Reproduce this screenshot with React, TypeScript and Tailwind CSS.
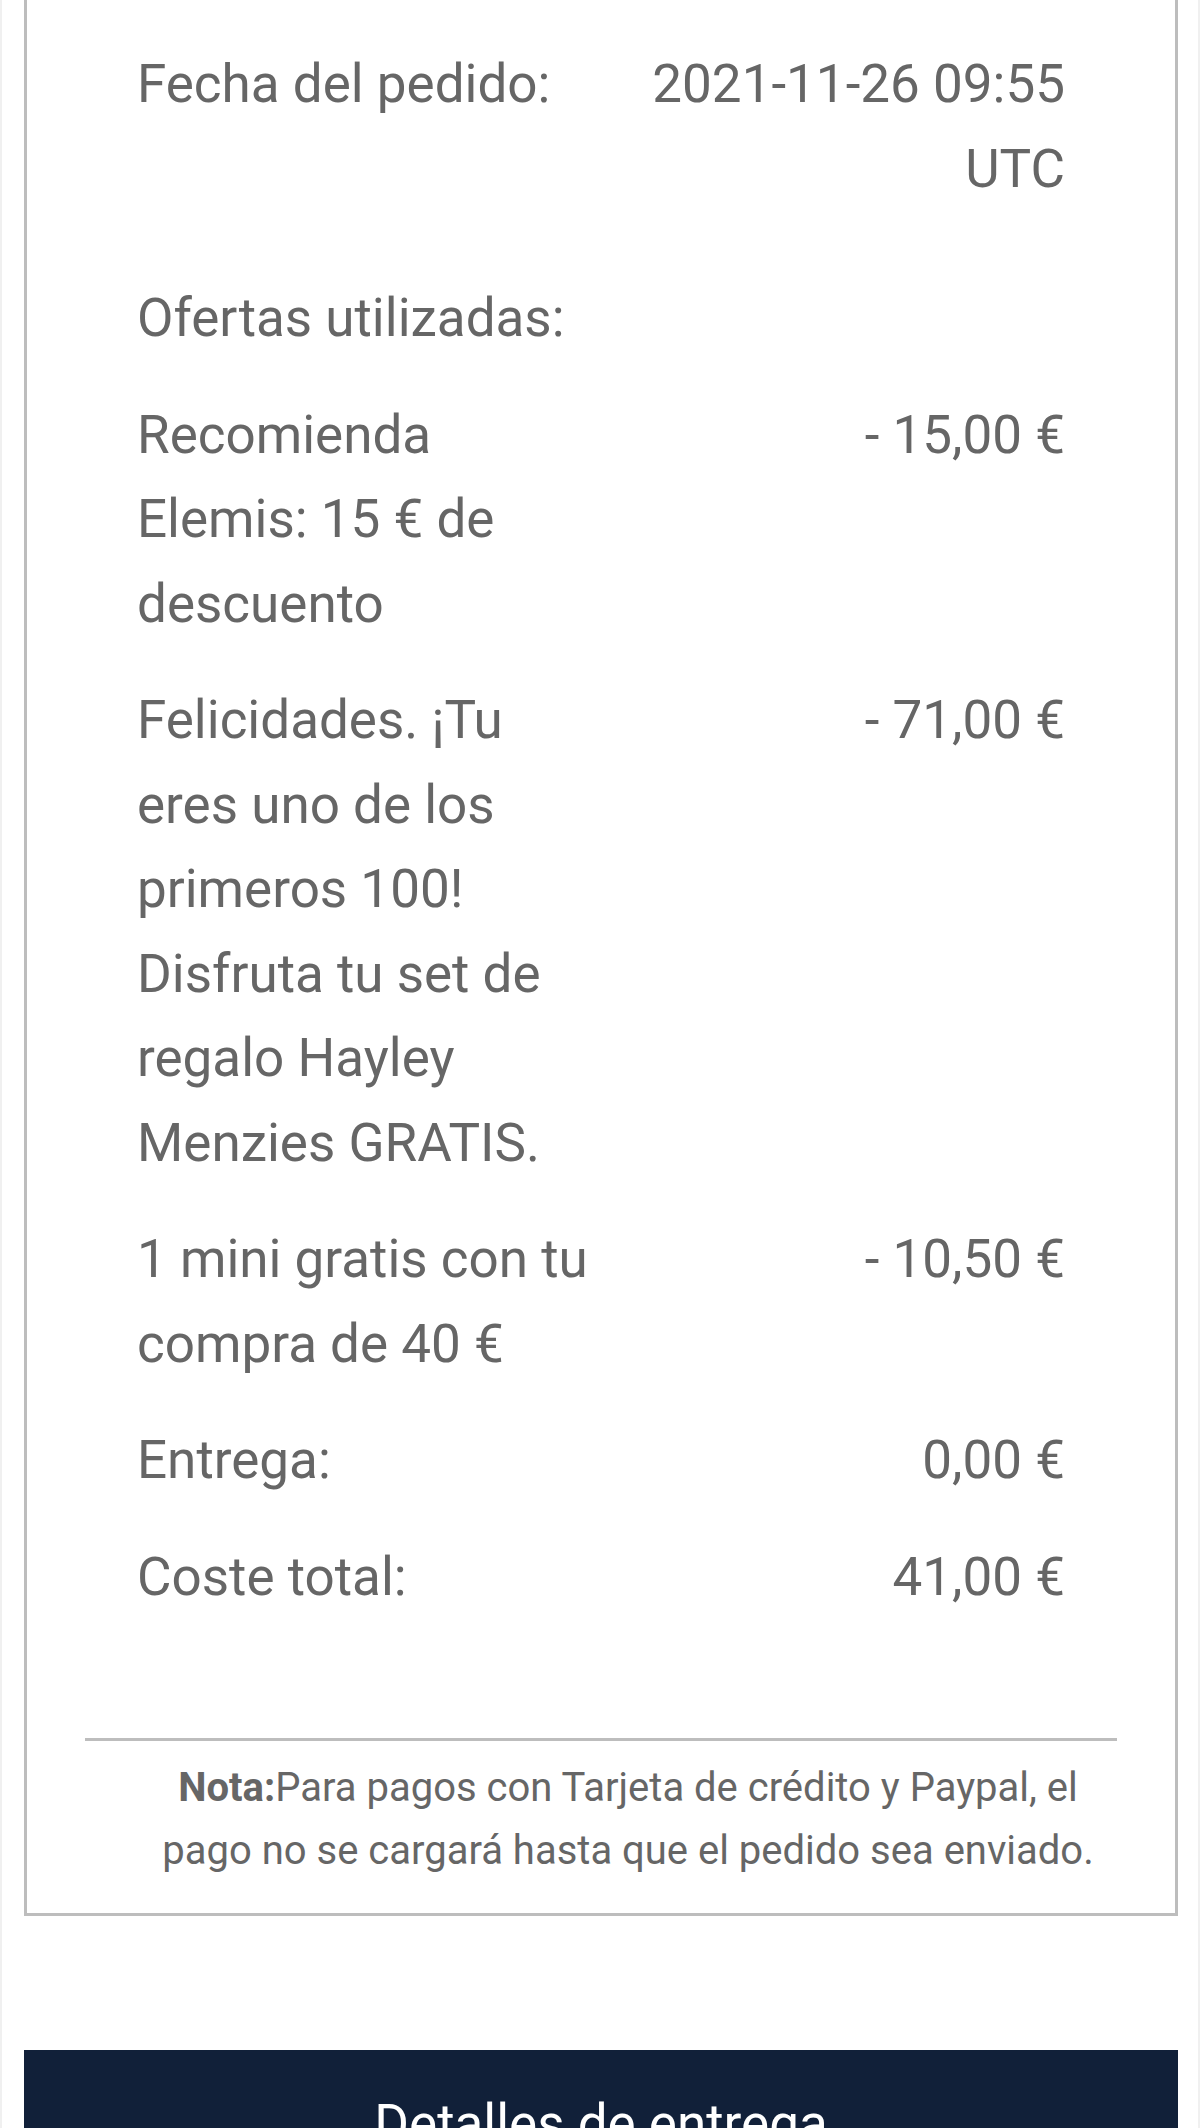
const rows = [
  { label: 'Recomienda Elemis: 15 € de descuento', value: '- 15,00 €' },
  {
    label: 'Felicidades. ¡Tu eres uno de los primeros 100! Disfruta tu set de regalo Hayley Menzies GRATIS.',
    value: '- 71,00 €',
  },
  { label: '1 mini gratis con tu compra de 40 €', value: '- 10,50 €' },
  { label: 'Entrega:', value: '0,00 €' },
  { label: 'Coste total:', value: '41,00 €' },
]

const Row = ({ label, value, className = '' }: { label: string; value?: string; className?: string }) => (
  <div className={`grid grid-cols-2 py-4 ${className}`}>
    <div>{label}</div>
    <div className="text-right">{value}</div>
  </div>
)

export default function App() {
  return (
    <div
      className="min-h-[2128px] bg-white border-x-2 border-[#f0f0f0] overflow-hidden text-[#666666]"
      style={{ fontFamily: 'Roboto, "Noto Sans", sans-serif' }}
    >
      {/* order summary card, scrolled so its top is off screen */}
      <div className="ml-[22px] mr-[20px] border-[3px] border-t-0 border-[#bdbdbd] bg-white">
        <div className="px-[110px] pt-[26px] text-[53px] leading-[84.5px]">
          <Row label="Fecha del pedido:" value="2021-11-26 09:55 UTC" />
          <Row label="Ofertas utilizadas:" className="mt-[33px]" />
          {rows.map((r, i) => (
            <Row key={i} label={r.label} value={r.value} />
          ))}
        </div>

        <div className="mt-[103px] mx-[58px] h-[3px] bg-[#bdbdbd]" />

        <p className="pl-[110px] pr-[56px] pt-[15px] pb-[31px] text-center text-[40px] leading-[63px]">
          <span className="font-bold">Nota:</span>Para pagos con Tarjeta de crédito y Paypal, el pago no se cargará hasta que el pedido sea enviado.
        </p>
      </div>

      <div className="mt-[134px] ml-[22px] mr-[20px] bg-[#112039] pt-[32px] pb-[32px]">
        <h2 className="text-center text-white text-[53px] leading-[84px]">Detalles de entrega</h2>
      </div>
    </div>
  )
}
